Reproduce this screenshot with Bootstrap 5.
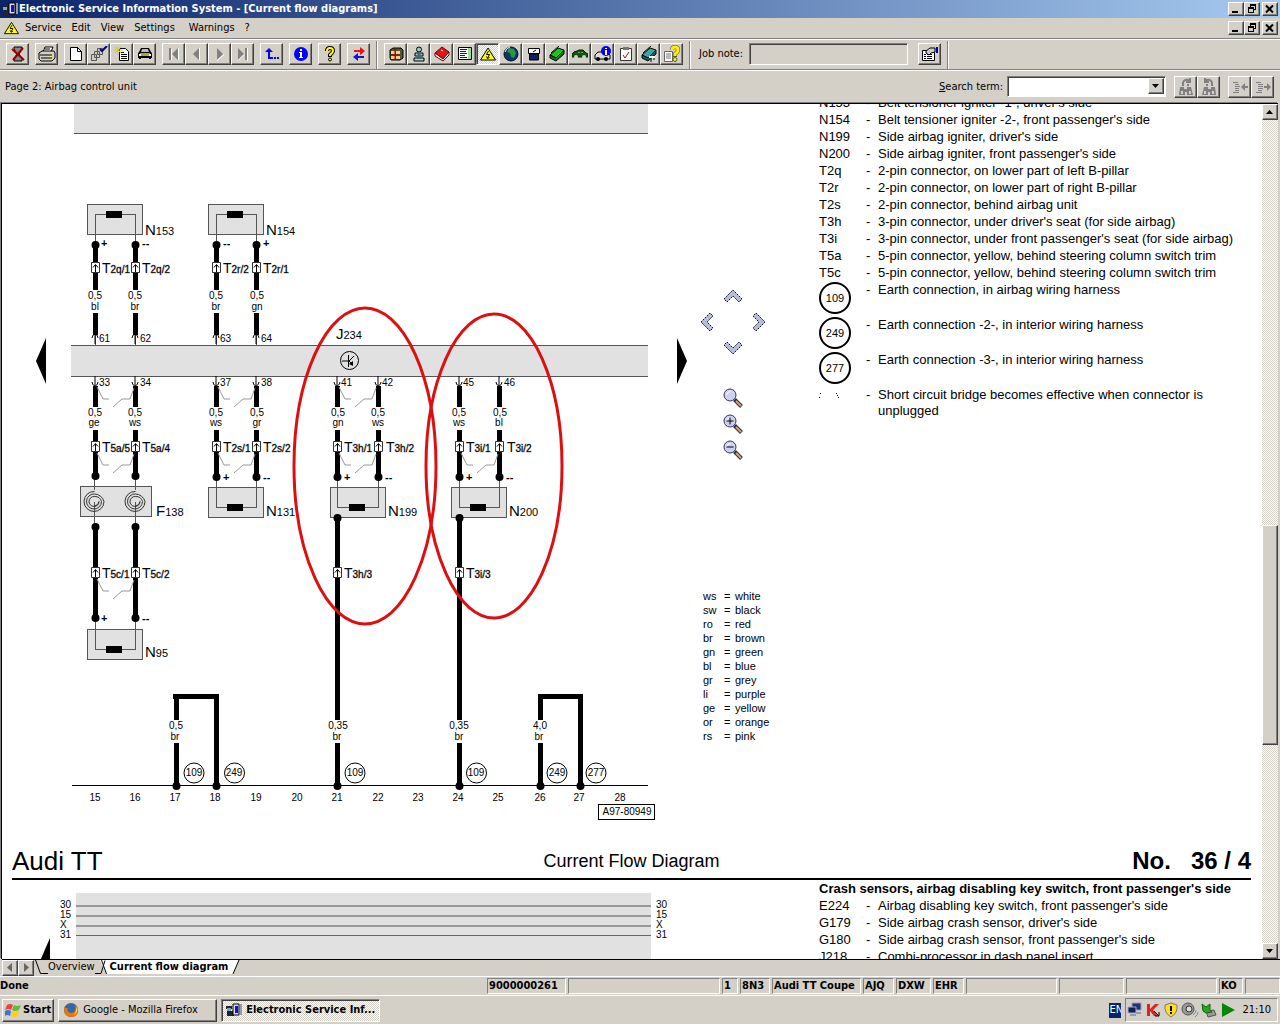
<!DOCTYPE html>
<html lang="en">
<head>
<meta charset="utf-8">
<meta name="viewport" content="width=device-width, initial-scale=1">
<title>Electronic Service Information System - [Current flow diagrams]</title>
<link href="https://cdn.jsdelivr.net/npm/bootstrap@5.3.0/dist/css/bootstrap.min.css" rel="stylesheet">
<style>
:root{--face:#d4d0c8;--shade:#808080;--dark:#404040}
body{background:var(--face);color:#000;font:11px/14px "DejaVu Sans Condensed","DejaVu Sans",sans-serif;overflow:hidden}
svg{display:block;flex:none}
a{color:#000;text-decoration:none}
.title-bar{height:18px;background:linear-gradient(90deg,#0a246a,#a6caf0);color:#fff;font-weight:700;padding:0 2px;gap:1px}
.menu-bar{height:20px;padding:0 2px 0 4px}
.menu-bar a{padding:0 5px}
.menu-bar svg + a{margin-left:1px}
.ui{background:var(--face);color:#000;border:1px solid;border-color:#fff var(--dark) var(--dark) #fff;border-radius:0;box-shadow:inset -1px -1px var(--shade);padding:0;font-size:11px;line-height:14px;display:flex;align-items:center;justify-content:center}
.win{width:16px;height:14px}
.win-set{gap:2px}
.tool{width:23px;height:22px}
.pushed{border-color:var(--shade) #fff #fff var(--shade);box-shadow:inset 1px 1px var(--dark);background:repeating-conic-gradient(#fff 0 25%,var(--face) 0 50%) 0 0/2px 2px}
.tool-bar{height:32px;border-top:1px solid var(--shade);box-shadow:inset 0 1px #fff;padding:1px 6px 0;gap:6px}
.tool-bar label{padding-left:2px}
.rule{width:2px;align-self:stretch;background:linear-gradient(90deg,var(--shade) 50%,#fff 50%);margin:1px 0 0}
.sunk{border:1px solid;border-color:var(--shade) #fff #fff var(--shade);box-shadow:inset 1px 1px var(--dark);border-radius:0;background:var(--face);height:22px;padding:0 4px;min-width:0}
.find-bar{height:33px;border-top:1px solid var(--shade);box-shadow:inset 0 1px #fff;padding:2px 6px 0 5px}
.combo{width:159px;border:1px solid;border-color:var(--shade) #fff #fff var(--shade);box-shadow:inset 1px 1px var(--dark);padding:1px 1px 0 1px;height:21px;background:#fff}
.combo select{appearance:none;border:0;background:#fff;min-width:0;margin:1px 0 0 1px}
.view-area{border-top:1px solid #000;border-left:1px solid #000;margin:1px 2px 0 1px;min-height:0;box-shadow:-1px -1px var(--shade)}
.sheet{background:#fff;min-width:0;overflow:hidden;font-family:"Liberation Sans",Arial,sans-serif}
.sheet-one{min-height:739px}
.pan{display:grid;grid-template-columns:repeat(3,26px);grid-template-rows:repeat(3,26px) 24px repeat(3,26px);margin-top:179px;margin-bottom:126px}
.pan button{border:0;background:none;padding:0;display:flex;align-items:center;justify-content:center}
.colour-key{font-size:11px;line-height:14px;margin-left:9px}
.colour-key td{padding:0}
.colour-key td:first-child{width:21px}
.colour-key td:nth-child(2){width:11px}
.parts{font-size:13px;line-height:16px;margin:1px 10px 0 47px}
.parts.scrolled{margin-top:-9px}
.parts li{display:grid;grid-template-columns:47px 12px 1fr;padding-bottom:1px}
.parts .tall{min-height:35px}
.parts .head-line{display:block;font-weight:700}
.ring{width:32px;height:32px;border:2px solid #000;border-radius:50%;font-size:11px;display:flex;align-items:center;justify-content:center}
.sheet-head{display:grid;grid-template-columns:1fr auto 1fr;align-items:center;height:37px;border-bottom:2px solid #000;margin:0 11px 0 10px;padding-top:2px}
.sheet-head .big{font-size:26px;line-height:28px}
.sheet-head .num{font-size:24px;line-height:28px}
.sheet-head .mid{font-size:18px;line-height:22px}
.scroll-col{width:16px;background:repeating-conic-gradient(#fff 0 25%,var(--face) 0 50%) 0 0/2px 2px}
.scroll-col .ui{width:16px}
.step{height:16px;width:16px}
.tabs-row{height:17px;border-top:1px solid #000;margin:0 0 0 2px;line-height:14px}
.tabs-row .on{background:#fff;font-weight:700;height:14px}
.status{height:21px;border-top:1px solid #fff;border-bottom:1px solid #fff;font-weight:700;gap:2px}
.cell{border:1px solid;border-color:var(--shade) #fff #fff var(--shade);height:16px;padding:0 1px;white-space:nowrap;flex:none}
.w16{width:16px}.w24{width:24px}.w30{width:30px}.w31{width:31px}.w35{width:35px}.w65{width:65px}.w79{width:79px}.w89{width:89px}.w91{width:91px}.w152{width:152px}
.task-bar{height:28px;padding:1px 2px;gap:4px}
.task-bar .ui{height:23px;justify-content:flex-start;padding:0 4px;gap:4px}
.task-bar .start{padding:0 2px;gap:2px}
.task{width:159px}
.lang-tag{background:#0a246a;color:#fff;width:12px;height:15px;overflow:hidden}
.tray{border:1px solid;border-color:var(--shade) #fff #fff var(--shade);height:24px;padding:0 6px 0 1px;gap:2px}
.dia{font-family:"Liberation Sans",Arial,sans-serif;font-size:10px;fill:#000}
.dia .c{text-anchor:middle}
.dia .L{font-size:15px}
.dia .sub{font-size:11px}
.dia .T{font-size:14px}
.dia .T .sub{font-size:10px;stroke:#000;stroke-opacity:.3}
.dia .pole{font-size:11px;font-weight:700}
.dia .w{stroke:#000;stroke-width:5;fill:none}
.dia .t{stroke:#555;stroke-width:1;fill:none}
.dia .b{fill:#e1e1e1;stroke:#555}
.px{shape-rendering:crispEdges}
</style>
</head>
<body class="vh-100 d-flex flex-column">
<svg width="0" height="0" class="position-absolute" aria-hidden="true">
<defs>
<symbol id="app" viewBox="0 0 16 14"><path d="M0 3h6v3H0zM1 8h7v5H1z" fill="#223"/><path d="M7 1h6v11H7z" fill="#dde" stroke="#000"/><path d="M9 3h3v7H9z" fill="#11c"/><path d="M14 1h2v11h-2z" fill="#99a"/><path d="M1 5h4v3H1z" fill="#7aa"/></symbol>
<symbol id="warn" viewBox="0 0 16 14"><path d="M8 1 15.500 13H.5z" fill="#ff0" stroke="#000"/><path d="M8.500 4 6.500 7.500h3L7.500 11M6.500 9.500l1 2 2-1" fill="none" stroke="#000"/></symbol>
<symbol id="min" viewBox="0 0 10 10"><path d="M1 7h6v2H1z"/></symbol>
<symbol id="max" viewBox="0 0 10 10"><path class="px" d="M3 0h6v6H7V5h1V2H4v1H3zM1 3h6v6H1zM2 5v3h4V5z" fill-rule="evenodd"/></symbol>
<symbol id="cls" viewBox="0 0 10 10"><path d="M1 1.500l7 7M8 1.500l-7 7" stroke="#000" stroke-width="2"/></symbol>
<symbol id="up" viewBox="0 0 8 8"><path d="M0 6h7L3.500 2z"/></symbol>
<symbol id="dn" viewBox="0 0 8 8"><path d="M0 2h7L3.500 6z"/></symbol>
<symbol id="con" viewBox="0 0 10 12"><path d="M.5.500h8v10h-8z" fill="#fff" stroke="#333"/><path d="M4.500 10V3M2 5.500l2.500-3 2.500 3" fill="none" stroke="#000"/></symbol>
<symbol id="bridge" viewBox="0 0 42 22"><path d="M2 0l6 12h6M18 20l9-8h8l4-11" fill="none" stroke="#999"/></symbol>
<symbol id="in" viewBox="0 0 8 12"><path d="M4 0v9M1 6q0 3 3 4q3-1 3-4" fill="none" stroke="#000"/></symbol>
<symbol id="out" viewBox="0 0 8 12"><path d="M4 11V1M1 5q0-3 3-4q3 1 3 4" fill="none" stroke="#000"/></symbol>
<symbol id="lens" viewBox="0 0 20 20"><path d="M11.500 11.500l7 7" stroke="#334" stroke-width="4"/><path d="M13 13l5 5" stroke="#d9a070" stroke-width="2"/><circle cx="7" cy="7" r="6" fill="#cdd2ea" stroke="#336"/><path d="M3.500 7a4 4 0 0 1 4-3.500" stroke="#fff" fill="none"/></symbol>
<symbol id="chev" viewBox="0 0 20 14"><path d="M1 10l9-9 9 9-3 3-6-6-6 6z" fill="#b9bcd8"/><path d="M1 10l9-9 9 9-3 3-6-6-6 6z" fill="none" stroke="#112" stroke-dasharray="2 1"/></symbol>
<symbol id="bino" viewBox="0 0 16 18"><path d="M2 9h4v2h3V9h4l2 8H9v-3H7v3H1zM4 4h2v4H4zM9 6h2v2H9z" fill="#808080"/><path d="M3 13h2v3H3zM11 13h2v3h-2z" fill="#d4d0c8"/><path d="M5 4q3-4 7-1M12 0v4H8" fill="none" stroke="#808080" stroke-width="2"/></symbol>
</defs>
</svg>

<header class="title-bar d-flex align-items-center">
  <svg width="16" height="14"><use href="#app"/></svg><span class="flex-grow-1 text-nowrap">Electronic Service Information System - [Current flow diagrams]</span>
  <div class="win-set d-flex"><div class="d-flex"><button class="ui win" aria-label="Minimize"><svg width="10" height="10"><use href="#min"/></svg></button><button class="ui win" aria-label="Restore"><svg width="10" height="10"><use href="#max"/></svg></button></div><button class="ui win" aria-label="Close"><svg width="10" height="10"><use href="#cls"/></svg></button></div>
</header>
<nav class="menu-bar d-flex align-items-center">
  <svg width="15" height="14"><use href="#warn"/></svg>
  <a href="#">Service</a><a href="#">Edit</a><a href="#">View</a><a href="#">Settings</a><a href="#" class="ms-1">Warnings</a><a href="#">?</a>
  <span class="flex-grow-1"></span>
  <div class="win-set d-flex"><div class="d-flex"><button class="ui win" aria-label="Minimize page"><svg width="10" height="10"><use href="#min"/></svg></button><button class="ui win" aria-label="Restore page"><svg width="10" height="10"><use href="#max"/></svg></button></div><button class="ui win" aria-label="Close page"><svg width="10" height="10"><use href="#cls"/></svg></button></div>
</nav>

<div class="tool-bar d-flex align-items-center">
  <button class="ui tool" aria-label="Exit"><svg width="16" height="16"><path d="M4 1h8v2l-3 5 3 5v2H4v-2l3-5-3-5z" fill="#888" stroke="#000"/><path d="M2 3l12 11M13 2L3 14" stroke="#900" stroke-width="2"/></svg></button>
  <button class="ui tool" aria-label="Print"><svg width="18" height="16"><path d="M5 6l2-5h8l-2 5" fill="#fff" stroke="#000"/><path d="M1 7l3-2h12l1 2v5l-3 3H3l-2-2z" fill="#d4d0c8" stroke="#000"/><path d="M2 9h12M3 12h11M7 3h5" stroke="#000"/><path d="M11 10h2v1h-2z" fill="#ff0"/></svg></button>
  <div class="d-flex">
    <button class="ui tool" aria-label="New"><svg width="14" height="16"><path d="M1.500 1.500h7l4 4v9h-11z" fill="#fff" stroke="#000"/><path d="M8.500 1v4.500h4" fill="none" stroke="#000"/></svg></button>
    <button class="ui tool" aria-label="Accept pages"><svg width="18" height="16"><path d="M1.500 8.500h5v6h-5zM4.500 5.500h5v6h-5zM7.500 2.500h5v6h-5z" fill="#d4d0c8" stroke="#555"/><path d="M10 3l2 2 5-5" fill="none" stroke="#009" stroke-width="2"/></svg></button>
    <button class="ui tool" aria-label="New order"><svg width="18" height="16"><path d="M6.500 2.500h6l3 3v9h-9z" fill="#fff" stroke="#000"/><path d="M8 6.500h3M8 8.500h6M8 10.500h6M8 12.500h6" stroke="#000"/><path d="M5 0v9M1 4h9M2 1l6 6M8 1L2 7" stroke="#cc3"/></svg></button>
    <button class="ui tool" aria-label="Vehicle"><svg width="18" height="16"><path d="M3 6l2-4h8l2 4 1 1v5h-1v1h-2v-1H5v1H3v-1H2V7z" fill="#000"/><path d="M5 6l1-3h6l1 3z" fill="#bbb"/><path d="M4 7h10v3H4z" fill="#aa3"/><path d="M3 8h2v2H3zM13 8h2v2h-2z" fill="#fff"/></svg></button>
  </div>
  <div class="d-flex">
    <button class="ui tool" aria-label="First"><svg width="14" height="14"><path d="M2 1h2v12H2zM11 1v12L5 7z" fill="#808080"/><path d="M11.500 1v12M4.500 2v11" stroke="#fff"/></svg></button>
    <button class="ui tool" aria-label="Previous"><svg width="14" height="14"><path d="M9 1v12L3 7z" fill="#808080"/><path d="M9.500 1v12" stroke="#fff"/></svg></button>
    <button class="ui tool" aria-label="Next"><svg width="14" height="14"><path d="M4 1v12l6-6z" fill="#808080"/><path d="M4 13.500l7-6" stroke="#fff"/></svg></button>
    <button class="ui tool" aria-label="Last"><svg width="14" height="14"><path d="M2 1v12l6-6zM9 1h2v12H9z" fill="#808080"/><path d="M11.500 1v13M2 13.500l6-6" stroke="#fff"/></svg></button>
  </div>
  <button class="ui tool" aria-label="Jump back"><svg width="14" height="14"><path d="M0 5l4-4 4 4H5v5h3v2H3V5z" fill="#00f"/><path d="M9 10h2v2H9zM12 10h2v2h-2z" fill="#00f"/></svg></button>
  <button class="ui tool" aria-label="Information"><svg width="16" height="16"><circle cx="8" cy="8" r="7" fill="#00f"/><path d="M7 3h2v2H7zM6 6h3v5h1v1H6v-1h1V7H6z" fill="#fff"/></svg></button>
  <button class="ui tool" aria-label="Help"><svg width="14" height="16"><path d="M4 5q0-3 3-3t3 3q0 1-3 4v2" fill="none" stroke="#000" stroke-width="4"/><path d="M4 5q0-3 3-3t3 3q0 1-3 4v1" fill="none" stroke="#ff0" stroke-width="2"/><circle cx="7" cy="13.500" r="1.500" fill="#ff0" stroke="#000"/></svg></button>
  <button class="ui tool" aria-label="Swap"><svg width="14" height="14"><path d="M2 3h6V0l5 4-5 4V5H2z" fill="#e11"/><path d="M12 9H6V6l-5 4 5 4v-3h6z" fill="#11d"/></svg></button>
  <span class="rule"></span>
  <div class="d-flex">
    <button class="ui tool" aria-label="Parts"><svg width="16" height="16"><path d="M2 4l3-2h8l2 2v8l-3 2H3l-1-2z" fill="#553" stroke="#000"/><path d="M3 5h4v3H3zM8 5h4v3H8zM3 10h4v3H3zM8 10h4v3H8z" fill="#fc8"/><path d="M7 3v11M3 9h9" stroke="#900"/></svg></button>
    <button class="ui tool" aria-label="Technician"><svg width="16" height="16"><circle cx="8" cy="3.500" r="2.500" fill="#9cc" stroke="#000"/><path d="M4 7h8v3H4zM3 12h10v3H3z" fill="#9dd" stroke="#000"/><path d="M8 6v7" stroke="#466" stroke-width="3"/></svg></button>
    <button class="ui tool" aria-label="Manual"><svg width="16" height="16"><path d="M1 7l7-6 7 5-6 7z" fill="#e11" stroke="#600"/><path d="M1 7l8 6 6-7v3l-6 6-8-5z" fill="#fff" stroke="#600"/><path d="M7 4l2 1" stroke="#fff"/></svg></button>
    <button class="ui tool" aria-label="List"><svg width="16" height="16"><path d="M1.500 1.500h13v12h-13z" fill="#fff" stroke="#000"/><path d="M11 2h3v11h-3z" fill="#9d9"/><path d="M3 3.500h7M3 5.500h6M3 7.500h7M3 9.500h5M3 11.500h7" stroke="#118"/></svg></button>
    <button class="ui tool pushed" aria-label="Current flow diagrams"><svg width="16" height="14"><use href="#warn"/></svg></button>
    <button class="ui tool" aria-label="World"><svg width="16" height="16"><circle cx="8" cy="8" r="7" fill="#136" stroke="#012"/><path d="M6 2l5 1 2 4-2 5-3-1-1-4-3-1z" fill="#294"/><path d="M2 6q1-4 5-5" stroke="#fff" fill="none"/></svg></button>
    <button class="ui tool" aria-label="Container"><svg width="16" height="16"><path d="M2.500 2.500h11v5h-11z" fill="#fff" stroke="#000"/><path d="M3.500 8h9v6h-9z" fill="#126" stroke="#000"/><path d="M7 6l3-2" stroke="#000"/></svg></button>
    <button class="ui tool" aria-label="Green book"><svg width="16" height="16"><path d="M1 9l8-7 6 2-8 8z" fill="#1c1" stroke="#000"/><path d="M1 9l6 3 8-8v4l-8 7-6-3z" fill="#171" stroke="#000"/><path d="M2 7l8-7" stroke="#000"/></svg></button>
    <button class="ui tool" aria-label="Body"><svg width="16" height="16"><path d="M0 8q2-3 5-3l2-1h4l3 3 2 1v3H0z" fill="#151" stroke="#020"/><circle cx="4" cy="11" r="2" fill="#d4d0c8"/><circle cx="12" cy="11" r="2" fill="#d4d0c8"/><path d="M6 6h2v1H6zM9 6h2v1H9z" fill="#7a7"/></svg></button>
    <button class="ui tool" aria-label="Vehicle information"><svg width="18" height="16"><path d="M1 9l3-3h8l4 3v4H1z" fill="#ddd" stroke="#000"/><circle cx="4" cy="13" r="2"/><circle cx="12" cy="13" r="2"/><circle cx="12" cy="5" r="5" fill="#00f"/><path d="M11 2h2v1h-2zM11 4h2v5h-2z" fill="#fff"/></svg></button>
    <button class="ui tool" aria-label="Checklist"><svg width="14" height="16"><path d="M1.500 2.500h11v12h-11z" fill="#fff" stroke="#333"/><path d="M4 1h6v3H4z" fill="#777"/><path d="M4 9l2 3 4-6" fill="none" stroke="#c00"/></svg></button>
    <button class="ui tool" aria-label="Repair book"><svg width="18" height="16"><path d="M2 9l8-7 6 2-8 8z" fill="#3aa" stroke="#000"/><path d="M2 9l6 3 8-8v4l-8 7-6-3z" fill="#166" stroke="#000"/><path d="M3 7l8-7M11 12v4M14 9v5" stroke="#000"/><path d="M9 11h6" stroke="#fff" stroke-width="2"/></svg></button>
    <button class="ui tool" aria-label="Guided help"><svg width="18" height="18"><path d="M1.500 6.500h8v10h-8z" fill="#fff" stroke="#666"/><path d="M3 9h5M3 11h5M3 13h5" stroke="#777"/><path d="M9 5q0-3 3-3t3 3q0 2-3 4v3" fill="none" stroke="#555" stroke-width="4"/><path d="M9 5q0-3 3-3t3 3q0 2-3 4v2" fill="none" stroke="#fe0" stroke-width="3"/><circle cx="12" cy="14.500" r="2" fill="#fe0" stroke="#555"/></svg></button>
  </div>
  <span class="rule"></span>
  <label for="job">Job note:</label>
  <input id="job" class="sunk task" type="text">
  <button class="ui tool ms-1" aria-label="Job properties"><svg width="18" height="16"><path d="M1.500 4.500h12v10h-12z" fill="#fff" stroke="#000"/><path d="M3 8.500h2M6 8.500h5M3 10.500h2M6 10.500h5M3 12.500h2M6 12.500h5" stroke="#000"/><path d="M5 5l4-3h5v4l-4 1-2 2-3-2z" fill="#ccc" stroke="#000"/><path d="M15 1h2v6h-2z" fill="#00a"/></svg></button>
  <span class="rule"></span>
</div>

<div class="find-bar d-flex align-items-center">
  <span class="flex-grow-1">Page 2: Airbag control unit</span>
  <label for="term"><u>S</u>earch term:</label>
  <div class="combo d-flex ms-1"><select id="term" class="flex-grow-1"><option></option></select><span class="ui step"><svg width="8" height="8"><use href="#dn"/></svg></span></div>
  <div class="d-flex ms-2"><button class="ui tool" aria-label="Find next"><svg width="16" height="18"><use href="#bino"/></svg></button><button class="ui tool" aria-label="Find previous"><svg width="16" height="18"><g transform="matrix(-1 0 0 1 16 0)"><use href="#bino" width="16" height="18"/></g></svg></button></div>
  <div class="d-flex ms-2"><button class="ui tool" aria-label="Previous hit"><svg width="16" height="14"><path d="M1 2.500h5M3 4.500h4M3 6.500h5M3 8.500h4M3 10.500h4M1 12.500h6" stroke="#808080"/><path d="M9 7l4-4v3h3v2h-3v3z" fill="#808080"/></svg></button><button class="ui tool" aria-label="Next hit"><svg width="16" height="14"><path d="M1 2.500h5M3 4.500h5M3 6.500h5M3 8.500h5M3 10.500h4M1 12.500h6" stroke="#808080"/><path d="M16 7l-4-4v3H9v2h3v3z" fill="#808080"/></svg></button></div>
</div>

<main class="view-area d-flex flex-grow-1">
  <div class="sheet flex-grow-1">
    <section class="sheet-one d-flex align-items-start">
      <svg class="dia" width="692" height="734" viewBox="2 104 692 734" role="img" aria-label="Airbag wiring diagram">
        <path d="M74 103h574v31H74z" fill="#e1e1e1"/><path class="t px" d="M74 133.500h574"/>
        <path class="px" d="M71 345h577v32H71z" fill="#e1e1e1"/><path class="t px" d="M71 345.500h577M71 376.500h577"/>
        <path d="M46 338v46L36 361zM677 338v46l10-23z"/>
        <g class="b px"><path d="M87.500 204.500h55v30h-55zM208.500 204.500h55v30h-55zM80.500 486.500h71v30h-71zM208.500 487.500h55v30h-55zM330.500 487.500h55v30h-55zM451.500 487.500h55v30h-55zM87.500 629.500h55v30h-55z"/></g>
        <path class="t px" d="M95.500 245v-31h40v31M216.500 245v-31h40v31M216.500 477v30h40v-30M337.500 477v30h41v-30M459.500 477v30h40v-30M95.500 618v31h40v-31M94.500 476v14M135.500 476v14M94.500 502v25M135.500 502v25M95.500 335v10M135.500 335v10M216.500 335v10M256.500 335v10"/>
        <path d="M106 211h16v7h-16zM227 211h16v7h-16zM227 504h16v7h-16zM349 504h16v7h-16zM470 504h16v7h-16zM106 646h16v7h-16z"/>
        <g fill="none" stroke="#333"><path id="coil" d="M94.500 491.500a10 10 0 1 0 9.500 10a10 10 0 0 0-9.500-7.500a7.500 7.500 0 1 0 7 7.500a7 7 0 0 0-7-5a5 5 0 1 0 4.500 5a5 5 0 0 1-4.500 4.500"/><use href="#coil" x="41"/></g>
        <path class="w px" d="M95.500 245v17M95.500 272v18M95.500 313v22M135.500 245v17M135.500 272v18M135.500 313v22M216.500 245v17M216.500 272v18M216.500 313v22M256.500 245v17M256.500 272v18M256.500 313v22
        M95.500 386v21M95.500 430v46M135.500 386v21M135.500 430v46M216.500 386v21M216.500 430v46M256.500 386v21M256.500 430v46M337.500 386v21M337.500 430v46M378.500 386v21M378.500 430v46M459.500 386v21M459.500 430v46M499.500 386v21M499.500 430v46
        M95.500 527v91M135.500 527v91M337.500 517v203M337.500 743v42M459.500 517v203M459.500 743v42M176.500 785v-42M176.500 720v-23.500h40V785M540.500 785v-42M540.500 720v-23.500h40V785"/>
        <path class="w px" d="M173 696.500h46M538 696.500h45"/>
        <g>
          <circle cx="95.500" cy="245" r="4"/><circle cx="135.500" cy="245" r="4"/><circle cx="216.500" cy="245" r="4"/><circle cx="256.500" cy="245" r="4"/>
          <circle cx="95.500" cy="476" r="4"/><circle cx="135.500" cy="476" r="4"/><circle cx="216.500" cy="477" r="4"/><circle cx="256.500" cy="477" r="4"/><circle cx="337.500" cy="477" r="4"/><circle cx="378.500" cy="477" r="4"/><circle cx="459.500" cy="477" r="4"/><circle cx="499.500" cy="477" r="4"/>
          <circle cx="95.500" cy="527" r="4"/><circle cx="135.500" cy="527" r="4"/><circle cx="95.500" cy="618" r="4"/><circle cx="135.500" cy="618" r="4"/><circle cx="337.500" cy="518" r="4"/><circle cx="459.500" cy="518" r="4"/>
          <circle cx="176.500" cy="786" r="4"/><circle cx="216.500" cy="786" r="4"/><circle cx="337.500" cy="786" r="4"/><circle cx="459.500" cy="786" r="4"/><circle cx="540.500" cy="786" r="4"/><circle cx="580.500" cy="786" r="4"/>
        </g>
        <path class="px" d="M72 785h576v1H72z"/>
        <g>
          <use href="#con" x="91" y="262" width="10" height="12"/><use href="#con" x="131" y="262" width="10" height="12"/><use href="#con" x="212" y="262" width="10" height="12"/><use href="#con" x="252" y="262" width="10" height="12"/>
          <use href="#con" x="91" y="441" width="10" height="12"/><use href="#con" x="131" y="441" width="10" height="12"/><use href="#con" x="212" y="441" width="10" height="12"/><use href="#con" x="252" y="441" width="10" height="12"/><use href="#con" x="333" y="441" width="10" height="12"/><use href="#con" x="374" y="441" width="10" height="12"/><use href="#con" x="455" y="441" width="10" height="12"/><use href="#con" x="495" y="441" width="10" height="12"/>
          <use href="#con" x="91" y="567" width="10" height="12"/><use href="#con" x="131" y="567" width="10" height="12"/><use href="#con" x="333" y="567" width="10" height="12"/><use href="#con" x="455" y="567" width="10" height="12"/>
          <use href="#out" x="91" y="333" width="8" height="12"/><use href="#out" x="131" y="333" width="8" height="12"/><use href="#out" x="212" y="333" width="8" height="12"/><use href="#out" x="252" y="333" width="8" height="12"/>
          <use href="#in" x="91" y="376" width="8" height="12"/><use href="#in" x="131" y="376" width="8" height="12"/><use href="#in" x="212" y="376" width="8" height="12"/><use href="#in" x="252" y="376" width="8" height="12"/><use href="#in" x="333" y="376" width="8" height="12"/><use href="#in" x="374" y="376" width="8" height="12"/><use href="#in" x="455" y="376" width="8" height="12"/><use href="#in" x="495" y="376" width="8" height="12"/>
          <use href="#bridge" x="95" y="387" width="42" height="22"/><use href="#bridge" x="216" y="387" width="42" height="22"/><use href="#bridge" x="337" y="387" width="42" height="22"/>
          <use href="#bridge" x="95" y="453" width="42" height="22"/><use href="#bridge" x="216" y="453" width="42" height="22"/><use href="#bridge" x="337" y="453" width="42" height="22"/><use href="#bridge" x="459" y="453" width="42" height="22"/><use href="#bridge" x="95" y="579" width="42" height="22"/>
        </g>
        <g class="pole"><text x="101" y="247">+</text><text x="142" y="247">--</text><text x="223" y="247">--</text><text x="263" y="247">+</text>
          <text x="223" y="481">+</text><text x="263" y="481">--</text><text x="344" y="481">+</text><text x="385" y="481">--</text><text x="466" y="481">+</text><text x="506" y="481">--</text><text x="101" y="622">+</text><text x="142" y="622">--</text></g>
        <g><text x="99" y="342">61</text><text x="140" y="342">62</text><text x="220" y="342">63</text><text x="261" y="342">64</text>
          <text x="99" y="386">33</text><text x="140" y="386">34</text><text x="220" y="386">37</text><text x="261" y="386">38</text><text x="341" y="386">41</text><text x="382" y="386">42</text><text x="463" y="386">45</text><text x="504" y="386">46</text></g>
        <g class="c"><text x="95" y="299">0,5</text><text x="95" y="310">bl</text><text x="135" y="299">0,5</text><text x="135" y="310">br</text><text x="216" y="299">0,5</text><text x="216" y="310">br</text><text x="257" y="299">0,5</text><text x="257" y="310">gn</text>
          <text x="95" y="416">0,5</text><text x="94" y="426">ge</text><text x="135" y="416">0,5</text><text x="135" y="426">ws</text><text x="216" y="416">0,5</text><text x="216" y="426">ws</text><text x="257" y="416">0,5</text><text x="257" y="426">gr</text><text x="338" y="416">0,5</text><text x="338" y="426">gn</text><text x="378" y="416">0,5</text><text x="378" y="426">ws</text><text x="459" y="416">0,5</text><text x="459" y="426">ws</text><text x="500" y="416">0,5</text><text x="499" y="426">bl</text>
          <text x="176" y="729">0,5</text><text x="175" y="740">br</text><text x="338" y="729">0,35</text><text x="337" y="740">br</text><text x="459" y="729">0,35</text><text x="459" y="740">br</text><text x="540" y="729">4,0</text><text x="539" y="740">br</text>
          <text x="95" y="801">15</text><text x="135" y="801">16</text><text x="175" y="801">17</text><text x="215" y="801">18</text><text x="256" y="801">19</text><text x="297" y="801">20</text><text x="337" y="801">21</text><text x="378" y="801">22</text><text x="418" y="801">23</text><text x="458" y="801">24</text><text x="498" y="801">25</text><text x="540" y="801">26</text><text x="579" y="801">27</text><text x="620" y="801">28</text></g>
        <g class="T"><text x="102" y="273">T<tspan class="sub">2q/1</tspan></text><text x="142" y="273">T<tspan class="sub">2q/2</tspan></text><text x="223" y="273">T<tspan class="sub">2r/2</tspan></text><text x="263" y="273">T<tspan class="sub">2r/1</tspan></text>
          <text x="102" y="452">T<tspan class="sub">5a/5</tspan></text><text x="142" y="452">T<tspan class="sub">5a/4</tspan></text><text x="223" y="452">T<tspan class="sub">2s/1</tspan></text><text x="263" y="452">T<tspan class="sub">2s/2</tspan></text><text x="344" y="452">T<tspan class="sub">3h/1</tspan></text><text x="386" y="452">T<tspan class="sub">3h/2</tspan></text><text x="466" y="452">T<tspan class="sub">3i/1</tspan></text><text x="507" y="452">T<tspan class="sub">3i/2</tspan></text>
          <text x="102" y="578">T<tspan class="sub">5c/1</tspan></text><text x="142" y="578">T<tspan class="sub">5c/2</tspan></text><text x="344" y="578">T<tspan class="sub">3h/3</tspan></text><text x="466" y="578">T<tspan class="sub">3i/3</tspan></text></g>
        <g class="L"><text x="145" y="235">N<tspan class="sub">153</tspan></text><text x="266" y="235">N<tspan class="sub">154</tspan></text><text x="156" y="516">F<tspan class="sub">138</tspan></text><text x="266" y="516">N<tspan class="sub">131</tspan></text><text x="388" y="516">N<tspan class="sub">199</tspan></text><text x="509" y="516">N<tspan class="sub">200</tspan></text><text x="145" y="657">N<tspan class="sub">95</tspan></text><text x="336" y="339">J<tspan class="sub">234</tspan></text></g>
        <circle cx="349.500" cy="360.500" r="9" fill="none" stroke="#000"/><path d="M342 361h6M348.500 355v12M349 361l5-5M349 361l4 4" fill="none" stroke="#000"/><path d="M353 366v-5l-4 3z"/>
        <g fill="#fff" stroke="#000"><circle cx="194" cy="773" r="10"/><circle cx="234.500" cy="773" r="10"/><circle cx="355" cy="773" r="10"/><circle cx="476.500" cy="773" r="10"/><circle cx="557" cy="773" r="10"/><circle cx="596" cy="773" r="10"/><path class="px" d="M598.500 804.500h56v15h-56z"/></g>
        <g class="c"><text x="194" y="776">109</text><text x="234" y="776">249</text><text x="355" y="776">109</text><text x="476" y="776">109</text><text x="557" y="776">249</text><text x="596" y="776">277</text><text x="627" y="815">A97-80949</text></g>
        <g fill="none" stroke="#dc1010" stroke-width="3"><ellipse cx="365" cy="466" rx="71" ry="158"/><ellipse cx="494" cy="466" rx="68" ry="152"/></g>
      </svg>
      <div class="flex-shrink-0">
        <div class="pan">
          <span></span><button aria-label="Up"><svg width="20" height="14"><use href="#chev"/></svg></button><span></span>
          <button aria-label="Left"><svg width="14" height="20"><g transform="matrix(0 -1 1 0 0 20)"><use href="#chev" width="20" height="14"/></g></svg></button><span></span><button aria-label="Right"><svg width="14" height="20"><g transform="matrix(0 1 -1 0 14 0)"><use href="#chev" width="20" height="14"/></g></svg></button>
          <span></span><button aria-label="Down"><svg width="20" height="14"><g transform="matrix(1 0 0 -1 0 14)"><use href="#chev" width="20" height="14"/></g></svg></button><span></span>
          <span></span><span></span><span></span>
          <span></span><button aria-label="Zoom"><svg width="20" height="20"><use href="#lens"/></svg></button><span></span>
          <span></span><button aria-label="Zoom in"><svg width="20" height="20"><use href="#lens"/><path d="M3.500 7h7M7 3.500v7" stroke="#000"/></svg></button><span></span>
          <span></span><button aria-label="Zoom out"><svg width="20" height="20"><use href="#lens"/><path d="M3.500 7h7" stroke="#000"/></svg></button><span></span>
        </div>
        <table class="colour-key"><tbody>
          <tr><td>ws</td><td>=</td><td>white</td></tr><tr><td>sw</td><td>=</td><td>black</td></tr><tr><td>ro</td><td>=</td><td>red</td></tr><tr><td>br</td><td>=</td><td>brown</td></tr><tr><td>gn</td><td>=</td><td>green</td></tr><tr><td>bl</td><td>=</td><td>blue</td></tr><tr><td>gr</td><td>=</td><td>grey</td></tr><tr><td>li</td><td>=</td><td>purple</td></tr><tr><td>ge</td><td>=</td><td>yellow</td></tr><tr><td>or</td><td>=</td><td>orange</td></tr><tr><td>rs</td><td>=</td><td>pink</td></tr>
        </tbody></table>
      </div>
      <ul class="parts scrolled list-unstyled flex-grow-1">
        <li><span>N153</span><span>-</span><span>Belt tensioner igniter -1-, driver's side</span></li>
        <li><span>N154</span><span>-</span><span>Belt tensioner igniter -2-, front passenger's side</span></li>
        <li><span>N199</span><span>-</span><span>Side airbag igniter, driver's side</span></li>
        <li><span>N200</span><span>-</span><span>Side airbag igniter, front passenger's side</span></li>
        <li><span>T2q</span><span>-</span><span>2-pin connector, on lower part of left B-pillar</span></li>
        <li><span>T2r</span><span>-</span><span>2-pin connector, on lower part of right B-pillar</span></li>
        <li><span>T2s</span><span>-</span><span>2-pin connector, behind airbag unit</span></li>
        <li><span>T3h</span><span>-</span><span>3-pin connector, under driver's seat (for side airbag)</span></li>
        <li><span>T3i</span><span>-</span><span>3-pin connector, under front passenger's seat (for side airbag)</span></li>
        <li><span>T5a</span><span>-</span><span>5-pin connector, yellow, behind steering column switch trim</span></li>
        <li><span>T5c</span><span>-</span><span>5-pin connector, yellow, behind steering column switch trim</span></li>
        <li class="tall"><span class="ring">109</span><span>-</span><span>Earth connection, in airbag wiring harness</span></li>
        <li class="tall"><span class="ring">249</span><span>-</span><span>Earth connection -2-, in interior wiring harness</span></li>
        <li class="tall"><span class="ring">277</span><span>-</span><span>Earth connection -3-, in interior wiring harness</span></li>
        <li><svg width="22" height="16"><path class="px" d="M1 6h1v1H1zM0 10h1v1H0zM17 6h1v1h-1zM18 8h1v1h-1zM19 10h1v1h-1z"/></svg><span>-</span><span>Short circuit bridge becomes effective when connector is unplugged</span></li>
      </ul>
    </section>
    <div class="sheet-head"><span class="big">Audi TT</span><span class="mid">Current Flow Diagram</span><span class="num fw-bold text-end">No. &nbsp;&nbsp;36 / 4</span></div>
    <section class="d-flex align-items-start">
      <svg class="dia" width="770" height="90" viewBox="2 880 770 90" role="img" aria-label="Supply rails">
        <path d="M76 893h575v80H76z" fill="#e1e1e1"/><g class="px" stroke="#999" stroke-width="2"><path d="M76 906h575M76 916h575M76 926h575"/><path d="M76 935.500h575" stroke="#666" stroke-width="1"/></g>
        <path d="M50 938v46L40 961z"/>
        <text x="60" y="908">30</text><text x="60" y="918">15</text><text x="60" y="928">X</text><text x="60" y="938">31</text><text x="656" y="908">30</text><text x="656" y="918">15</text><text x="656" y="928">X</text><text x="656" y="938">31</text>
      </svg>
      <ul class="parts list-unstyled flex-grow-1">
        <li class="head-line text-nowrap">Crash sensors, airbag disabling key switch, front passenger's side</li>
        <li><span>E224</span><span>-</span><span>Airbag disabling key switch, front passenger's side</span></li>
        <li><span>G179</span><span>-</span><span>Side airbag crash sensor, driver's side</span></li>
        <li><span>G180</span><span>-</span><span>Side airbag crash sensor, front passenger's side</span></li>
        <li><span>J218</span><span>-</span><span>Combi-processor in dash panel insert</span></li>
      </ul>
    </section>
  </div>
  <div class="scroll-col d-flex flex-column flex-shrink-0">
    <button class="ui step" aria-label="Scroll up"><svg width="8" height="8"><use href="#up"/></svg></button>
    <span style="flex:406 0 0"></span><span class="ui" style="flex:218 0 0"></span><span style="flex:198 0 0"></span>
    <button class="ui step" aria-label="Scroll down"><svg width="8" height="8"><use href="#dn"/></svg></button>
  </div>
</main>

<nav class="tabs-row d-flex">
  <button class="ui step" aria-label="Previous tab"><svg width="8" height="10"><path d="M6 0v9L1 4.500z" fill="#666"/></svg></button><button class="ui step" aria-label="Next tab"><svg width="8" height="10"><path d="M2 0v9l5-4.500z" fill="#666"/></svg></button>
  <svg width="14" height="15"><path d="M1.500 0l5 13.500H14" fill="none" stroke="#000"/></svg><a href="#">Overview</a>
  <svg width="15" height="15"><path d="M5 0h10v14h-4z" fill="#fff"/><path d="M0 13.500h6l4-13M6.500 0l5 14" fill="none" stroke="#000"/></svg><a href="#" class="on">Current flow diagram</a>
  <svg width="12" height="15"><path d="M0 0h11L5 14H0z" fill="#fff"/><path d="M11 0L5 14" fill="none" stroke="#000"/></svg>
</nav>

<div class="status d-flex align-items-center">
  <span class="flex-grow-1">Done</span>
  <span class="cell w79">9000000261</span><span class="cell w152"></span><span class="cell w16">1</span><span class="cell w30">8N3</span><span class="cell w89">Audi TT Coupe</span><span class="cell w31">AJQ</span><span class="cell w35">DXW</span><span class="cell w31">EHR</span><span class="cell w91"></span><span class="cell w65"></span><span class="cell w91"></span><span class="cell w24">KO</span><span class="cell w35"></span>
</div>

<footer class="task-bar d-flex align-items-center">
  <button class="ui start fw-bold"><svg width="16" height="16"><path d="M2 3q3-2 6 0L6 8Q3 6 0 8z" fill="#e43"/><path d="M9 3q3 2 7 0l-2 5q-4 2-7 0z" fill="#6b3"/><path d="M0 9q3-2 6 0l-1 5q-3-2-5 0z" fill="#37d"/><path d="M7 9q3 2 7 0l-1 5q-4 2-7 0z" fill="#fc2"/></svg>Start</button>
  <button class="ui task"><svg width="16" height="16"><circle cx="8" cy="8" r="7" fill="#36a"/><path d="M1 6q0 9 8 9 6 0 6-8-2-4-3-4 2 8-4 8-5-1-3-5-3 1-4-2z" fill="#e70"/><path d="M14 5q2 6-5 9 4-2 4-7z" fill="#fc3"/></svg>Google - Mozilla Firefox</button>
  <button class="ui task pushed fw-bold text-nowrap overflow-hidden"><svg width="16" height="14"><use href="#app"/></svg>Electronic Service Inf...</button>
  <span class="flex-grow-1"></span>
  <span class="lang-tag">EN</span>
  <div class="tray d-flex align-items-center">
    <svg width="16" height="16"><path d="M5 1h9v7H5z" fill="#237" stroke="#99b"/><path d="M1 5h8v6H1z" fill="#125" stroke="#aac"/><path d="M3 12h6v2H3zM9 10h5v2H9z" fill="#99a"/></svg>
    <svg width="16" height="16"><path d="M2 2h3v5l5-5h4L8 8l5 6H9L5 9v5H2z" fill="#d22"/><path d="M9 9l5 5M14 10v4h-4" stroke="#000" fill="none"/></svg>
    <svg width="16" height="16"><path d="M8 1l6 2q1 8-6 12Q1 11 2 3z" fill="#fd2" stroke="#876"/><path d="M7 4h2v5H7zM7 10h2v2H7z"/></svg>
    <svg width="18" height="16"><circle cx="7" cy="7" r="6" fill="#999" stroke="#555"/><circle cx="8" cy="7" r="3" fill="#ddd" stroke="#333"/><path d="M12 13q3-2 3-5M14 15q3-2 3-5" stroke="#88b" fill="none"/></svg>
    <svg width="16" height="16"><path d="M5 9l8-1 2 5-8 2z" fill="#999" stroke="#555"/><path d="M1 2l4 3 4-3v6l2 2-6 1-3-2z" fill="#2a2" stroke="#161"/></svg>
    <svg width="17" height="16"><path d="M3 1l13 7-13 7z" fill="#080"/></svg>
    <span class="ps-1">21:10</span>
  </div>
</footer>
<script src="https://cdn.jsdelivr.net/npm/bootstrap@5.3.0/dist/js/bootstrap.bundle.min.js"></script>
</body>
</html>
